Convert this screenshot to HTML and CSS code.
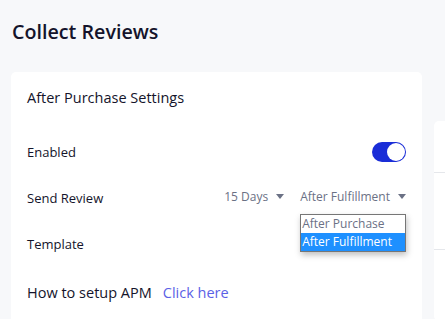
FILE: index.html
```html
<!DOCTYPE html>
<html lang="en">
<head>
  <meta charset="UTF-8">
  <title>Collect Reviews</title>
  <link rel="stylesheet" href="styles.css">
</head>
<body>

  <h1 class="page-title">Collect Reviews</h1>

  <div class="layout">
    <div class="card">
      <h2 class="card-title">After Purchase Settings</h2>

      <div class="rows">
        <div class="row">
          <span class="label">Enabled</span>
          <span class="toggle on"><span class="knob"></span></span>
        </div>

        <div class="row">
          <span class="label">Send Review</span>
          <div class="selects">
            <span class="select">15 Days <span class="caret"></span></span>
            <span class="select open">After Fulfillment <span class="caret"></span>
              <span class="listbox">
                <span class="option">After Purchase</span>
                <span class="option selected">After Fulfillment</span>
              </span>
            </span>
          </div>
        </div>

        <div class="row">
          <span class="label">Template</span>
        </div>

        <div class="row">
          <span class="help">How to setup APM</span>
          <a class="link" href="#">Click here</a>
        </div>
      </div>
    </div>

    <div class="side-card">
      <div class="side-section"></div>
      <div class="side-section tall"></div>
      <div class="side-section"></div>
    </div>
  </div>

</body>
</html>
```

FILE: styles.css
```css
* {
  box-sizing: border-box;
}

html, body {
  margin: 0;
  height: 100%;
}

body {
  background: #f7f8fa;
  font-family: "Open Sans", "Noto Sans", sans-serif;
  color: #14142b;
  overflow: hidden;
}

.page-title {
  margin: 0;
  padding: 18px 12px 0;
  font-size: 19.7px;
  line-height: 28px;
  font-weight: 600;
}

.layout {
  display: flex;
  gap: 12px;
  margin-top: 26px;
  padding-left: 11px;
}

.card {
  flex: 0 0 411px;
  height: 260px;
  background: #fff;
  border-radius: 5px;
  padding: 16px 16px 0;
}

.card-title {
  margin: 0;
  font-size: 14.5px;
  line-height: 20px;
  font-weight: 400;
}

.rows {
  margin-top: 21px;
}

.row {
  display: flex;
  align-items: center;
  height: 46px;
  font-size: 13px;
}

.row:last-child {
  height: 50px;
}

.label {
  flex: 1;
}

/* toggle switch */
.toggle {
  position: relative;
  width: 34px;
  height: 20px;
  border-radius: 10px;
  background: #d1d5db;
}

.toggle.on {
  background: #1a2dd7;
}

.knob {
  position: absolute;
  top: 1px;
  right: 1px;
  width: 18px;
  height: 18px;
  border-radius: 50%;
  background: #fff;
}

/* selects */
.selects {
  display: flex;
  gap: 16px;
  margin-top: -4px;
}

.select {
  position: relative;
  color: #6b7185;
  font-size: 12px;
  display: flex;
  align-items: center;
  gap: 8px;
}

.caret {
  width: 0;
  height: 0;
  border-left: 4px solid transparent;
  border-right: 4px solid transparent;
  border-top: 5px solid #6b7185;
}

.listbox {
  position: absolute;
  top: 26px;
  left: 0;
  width: 106px;
  display: flex;
  flex-direction: column;
  background: #fff;
  border: 1px solid #767676;
  box-shadow: 1px 3px 6px rgba(0, 0, 0, 0.25);
  z-index: 2;
}

.option {
  padding: 0 1px;
  font-size: 12px;
  line-height: 18px;
  color: #6b7185;
  white-space: nowrap;
}

.option.selected {
  background: #1e90ff;
  color: #fff;
}

.help {
  font-size: 14.5px;
  font-weight: 400;
}

.link {
  margin-left: 11px;
  font-size: 14.5px;
  font-weight: 400;
  color: #5b5fe6;
  text-decoration: none;
}

/* partially visible right card */
.side-card {
  flex: 1;
  margin-top: 49px;
  height: 200px;
  background: #fff;
  border-radius: 5px 0 0 5px;
}

.side-section {
  height: 52px;
  border-bottom: 1px solid #e5e7eb;
}

.side-section.tall {
  height: 77px;
}

.side-section:last-child {
  border-bottom: none;
}
```
